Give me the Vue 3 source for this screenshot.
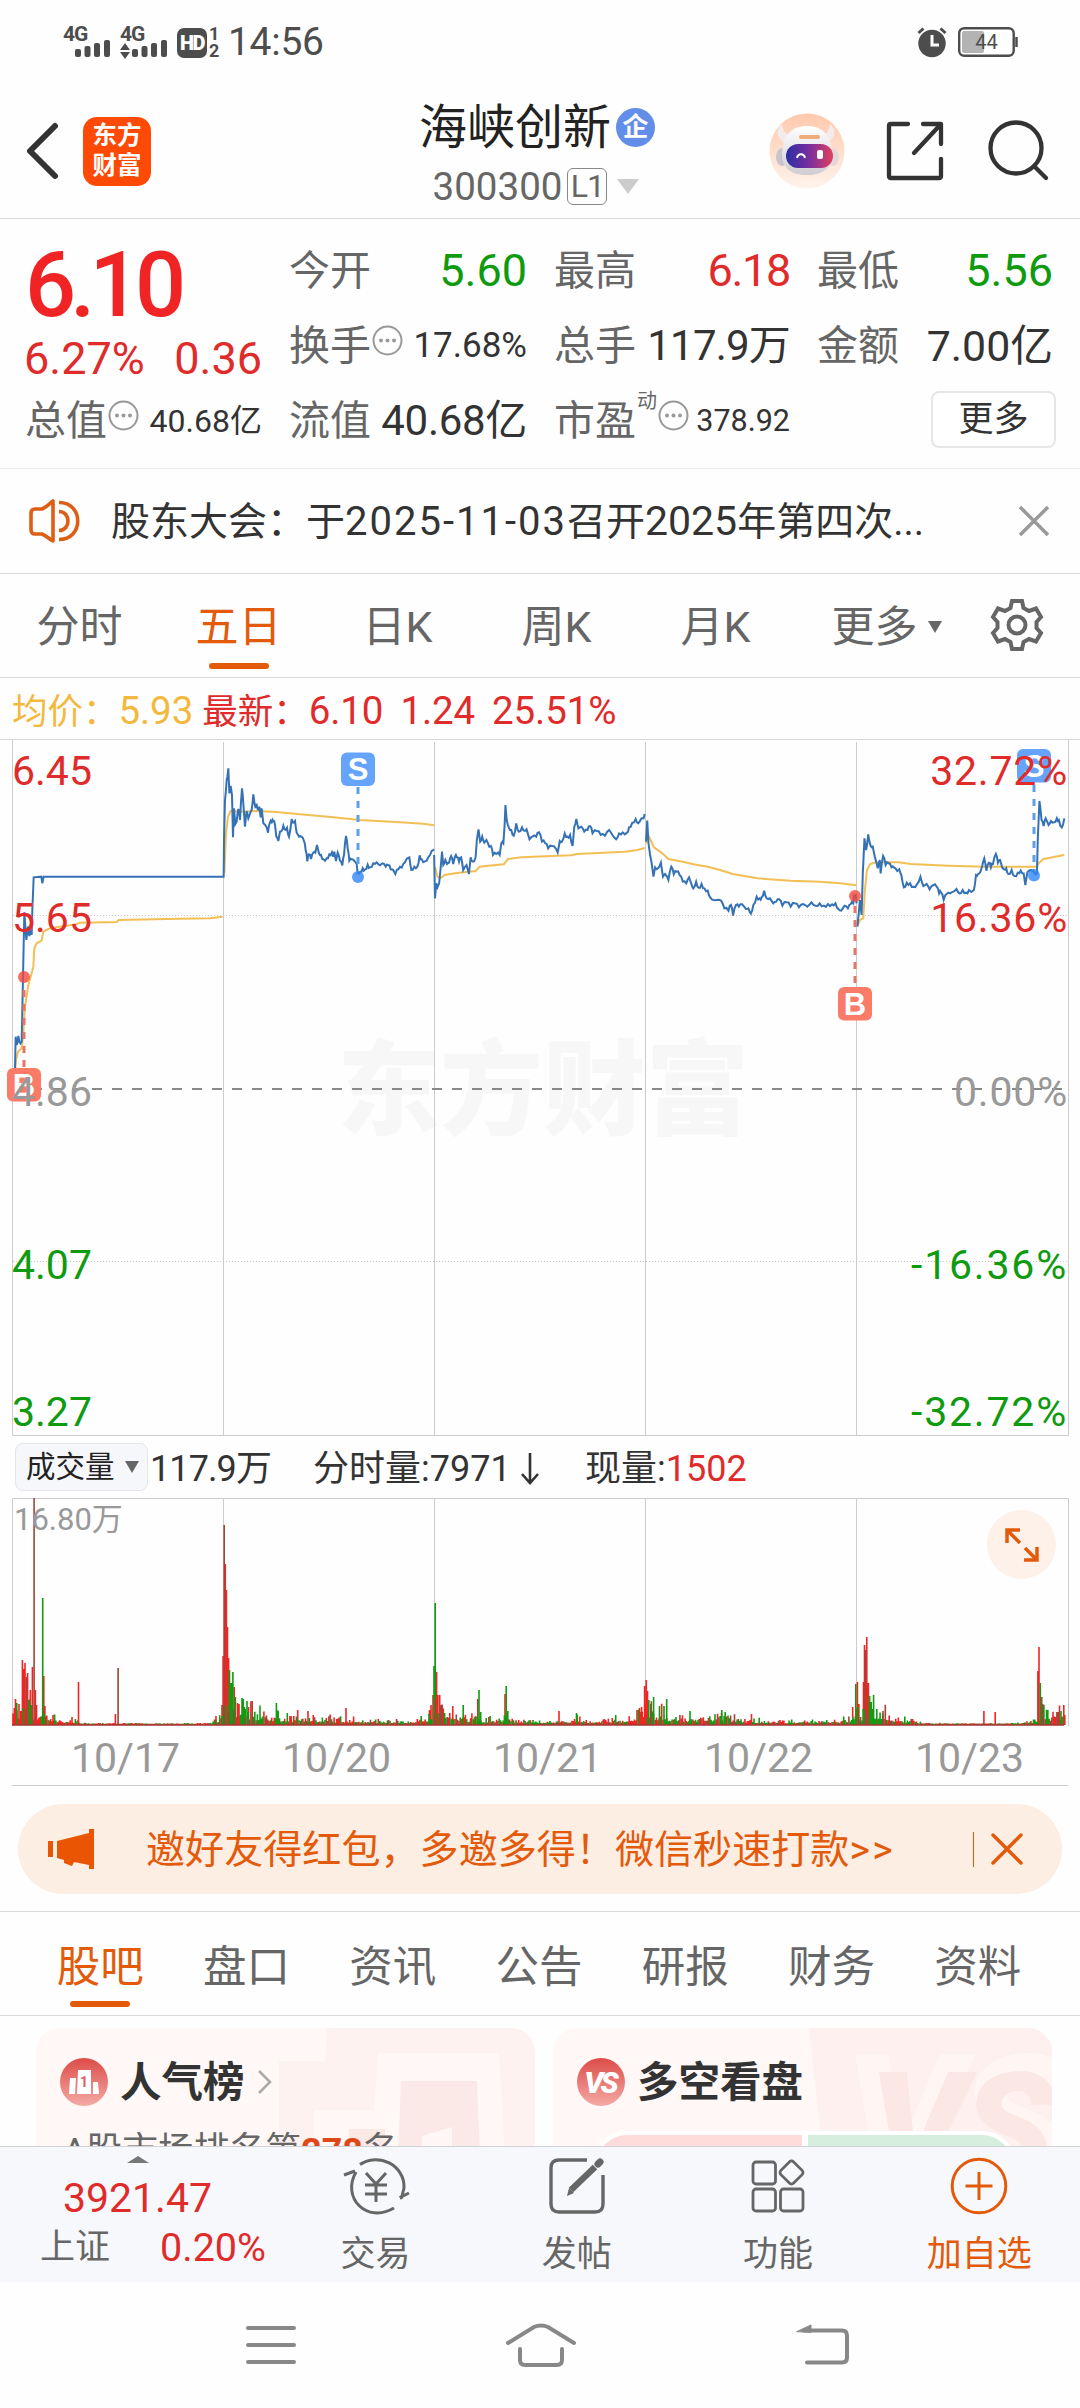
<template>
  <div class="phone">
    <!-- 状态栏 -->
    <div class="status-bar">
      <div class="status-left">
        <svg width="152" height="36" viewBox="0 0 152 36" fill="#4d4d4d">
          <text x="0" y="17" class="net">4G</text>
          <rect x="12" y="25" width="6" height="8" rx="2" />
          <rect x="21.500" y="22" width="6" height="11" rx="2" />
          <rect x="31" y="19" width="6" height="14" rx="2" />
          <rect x="41" y="16" width="6" height="17" rx="2" />
          <text x="57" y="17" class="net">4G</text>
          <path d="M57 26l5-7 5 7zM57 28h10l-5 7z" />
          <rect x="69" y="25" width="6" height="8" rx="2" />
          <rect x="78.500" y="22" width="6" height="11" rx="2" />
          <rect x="88" y="19" width="6" height="14" rx="2" />
          <rect x="98" y="16" width="6" height="17" rx="2" />
          <rect x="114" y="4" width="30" height="30" rx="7" />
          <text x="117" y="26" class="hd">HD</text>
        </svg>
        <div class="sim"><span>1</span><span>2</span></div>
        <span class="clock">14:56</span>
      </div>
      <div class="status-right">
        <svg width="30" height="30" viewBox="0 0 30 30">
          <circle cx="15" cy="16.500" r="13.700" fill="#4d4d4d" />
          <path d="M1.500 6l5-4.500M28.500 6l-5-4.500" stroke="#4d4d4d" stroke-width="3" />
          <path d="M15 8v10h7" fill="none" stroke="#fff" stroke-width="3" />
        </svg>
        <svg width="60" height="30" viewBox="0 0 60 30">
          <rect x="1.200" y="1.200" width="54.500" height="27.600" rx="5" fill="#fff" stroke="#4d4d4d" stroke-width="2.400" />
          <rect x="4" y="4" width="22" height="22" rx="2" fill="#b3b3b3" />
          <path d="M58.500 10v10" stroke="#4d4d4d" stroke-width="2.500" />
          <text x="28.500" y="22" class="battery">44</text>
        </svg>
      </div>
    </div>

    <!-- 标题栏 -->
    <div class="header">
      <div class="header-left">
        <svg width="34" height="58" viewBox="0 0 34 58">
          <path d="M30 4L5 29l25 25" fill="none" stroke="#333" stroke-width="6" stroke-linecap="round" stroke-linejoin="round" />
        </svg>
        <div class="logo"><span>东方</span><span>财富</span></div>
      </div>
      <div class="header-title">
        <div class="name">海峡创新<span class="badge">企</span></div>
        <div class="code">300300<span class="level">L1</span><i class="caret"></i></div>
      </div>
      <div class="header-right">
        <svg width="76" height="76" viewBox="0 0 76 76">
          <defs>
            <linearGradient id="halo" x1="0" y1="0" x2="0" y2="1">
              <stop offset="0" stop-color="#ffc9ac" /><stop offset="1" stop-color="#fff3ec" />
            </linearGradient>
            <linearGradient id="visor" x1="0" y1="0" x2="1" y2="0">
              <stop offset="0" stop-color="#2b2fa3" /><stop offset=".5" stop-color="#7a2f9f" /><stop offset="1" stop-color="#e2405c" />
            </linearGradient>
            <linearGradient id="shell" x1="0" y1="0" x2="0" y2="1">
              <stop offset="0" stop-color="#fff" /><stop offset="1" stop-color="#cfccd2" />
            </linearGradient>
          </defs>
          <circle cx="38" cy="38" r="37.500" fill="url(#halo)" />
          <path d="M13 11c-6 5-7 13 3 19l7-7c-6-1-9-5-10-12zM61 11c6 5 7 13-3 19l-6-7c6-1 8-5 9-12z" fill="#f3ebea" />
          <ellipse cx="13" cy="44" rx="6" ry="9" fill="#c9c3cb" />
          <ellipse cx="64" cy="44" rx="6" ry="9" fill="#e2d8dc" />
          <path d="M13 42c0-19 9-29 25-29s25 10 25 29c0 13-9 20-25 20s-25-7-25-20z" fill="url(#shell)" />
          <rect x="30" y="22" width="21" height="4" rx="2" fill="#efac78" />
          <rect x="17" y="31" width="47" height="24" rx="12" fill="url(#visor)" />
          <path d="M28 45c1-5 7-5 8 0" fill="none" stroke="#fff" stroke-width="2" />
          <rect x="48" y="37" width="6" height="9" rx="2" fill="#fff" />
        </svg>
        <svg width="60" height="60" viewBox="0 0 60 60" fill="none" stroke="#333" stroke-width="4.300" stroke-linecap="round" stroke-linejoin="round">
          <path d="M22 3H5q-2 0-2 2v50q0 2 2 2h48q2 0 2-2V38M37 3h18v20M55 3L28 32" />
        </svg>
        <svg width="62" height="62" viewBox="0 0 62 62" fill="none" stroke="#333" stroke-width="4.300" stroke-linecap="round">
          <circle cx="29" cy="28" r="25.500" />
          <path d="M47 46l12 12" />
        </svg>
      </div>
    </div>

    <!-- 行情 -->
    <div class="quote">
      <div class="price-box">
        <div class="price">6.10</div>
        <div class="change"><span>6.27%</span><span>0.36</span></div>
      </div>
      <div v-for="item in stats" :key="item.label" class="stat">
        <span class="label">{{ item.label }}</span>
        <sup v-if="item.sup">{{ item.sup }}</sup>
        <svg v-if="item.tip" class="tip" width="31" height="31" viewBox="0 0 31 31">
          <circle cx="15.500" cy="15.500" r="14" fill="none" stroke="#999" stroke-width="2" />
          <circle cx="9" cy="15.500" r="2" fill="#999" />
          <circle cx="15.500" cy="15.500" r="2" fill="#999" />
          <circle cx="22" cy="15.500" r="2" fill="#999" />
        </svg>
        <span class="value" :class="[item.color, item.size]">{{ item.value }}</span>
      </div>
      <div class="more-cell"><button class="more-btn">更多</button></div>
    </div>

    <!-- 公告 -->
    <div class="notice">
      <svg width="52" height="44" viewBox="0 0 52 44" fill="none" stroke="#dc5f14" stroke-width="3.600">
        <path d="M24 2v40C20 40 18 37 13 35H6q-4 0-4-4V14q0-4 4-4h7c5-2 7-5 11-8z" stroke-linejoin="round" />
        <path d="M30 3.500c25 0 25 37 0 37M30 12.500c12 0 12 19 0 19" />
      </svg>
      <div class="notice-text">股东大会：于<span class="date">2025-11-03</span>召开<span class="num">2025</span>年第四次...</div>
      <svg width="30" height="30" viewBox="0 0 30 30"><path d="M1 1l28 28M29 1L1 29" stroke="#999" stroke-width="3.500" /></svg>
    </div>

    <!-- 周期 -->
    <div class="period">
      <div v-for="p in periods" :key="p" class="period-item" :class="{ active: p === '五日' }">
        {{ p }}<i v-if="p === '更多'" class="caret small"></i>
      </div>
      <div class="gear">
        <svg width="54" height="54" viewBox="0 0 54 54" fill="none" stroke="#666" stroke-width="4">
          <path d="M22 3h10l1.500 7 5.500 3 7-2.500 5 8.500-4.500 5v6l4.500 5-5 8.500-7-2.500-5.500 3L32 51H22l-1.500-7-5.500-3-7 2.500L3 35l4.500-5v-6L3 19l5-8.500 7 2.500 5.500-3z" />
          <circle cx="27" cy="27" r="8.500" />
        </svg>
      </div>
    </div>

    <div class="info-line">
      <span class="avg">均价：<b>5.93</b></span>
      <span class="last">最新：<b>6.10</b><b>1.24</b><b>25.51%</b></span>
    </div>

    <!-- 五日走势 -->
    <svg class="chart" width="1080" height="696" viewBox="0 0 1080 696">
      <text x="337" y="387" class="watermark">东方财富</text>
      <path d="M12.500 0V695.500H1068.500V0" class="grid" />
      <path v-for="x in gridX" :key="x" :d="`M${x} 2V695`" class="grid" />
      <path d="M13 175.500H1068M13 521.500H1068" class="dotted" />
      <path d="M12 349H1066" class="zero" />
      <g transform="scale(.33333)">
        <polyline v-for="(l, i) in avgLeft" :key="i" :points="l" class="line-avg" />
        <polyline v-for="(l, i) in priceLeft" :key="i" :points="jag(l)" class="line-price" />
      </g>
      <g transform="translate(430 0) scale(.41457 .33333)">
        <polyline v-for="(l, i) in avgRight" :key="i" :points="l" class="line-avg" />
        <polyline v-for="(l, i) in priceRight" :key="i" :points="jag(l)" class="line-price" />
      </g>
      <g v-for="(m, i) in marks" :key="i" :class="m.type === 'S' ? 'sell' : 'buy'">
        <path :d="`M${m.x} ${m.from}V${m.to}`" class="mark-line" />
        <circle :cx="m.x" :cy="m.dot" r="6" />
        <rect :x="m.x - 17" :y="m.y" width="34" height="33.500" rx="6" />
        <text :x="m.x" :y="m.y + 27.500" class="mark-text">{{ m.type }}</text>
      </g>
      <g v-for="a in axis" :key="a.y" :class="a.color" class="axis">
        <text x="12" :y="a.y">{{ a.price }}</text>
        <text x="1068" :y="a.y" class="pct" :class="{ minus: a.pct[0] === '-' }">{{ a.pct }}</text>
      </g>
    </svg>

    <!-- 成交量 -->
    <div class="vol-head">
      <div class="vol-select">成交量<i class="caret small"></i></div>
      <span class="vol-total">117.9万</span>
      <span class="vol-min">分时量:7971<svg width="20" height="32" viewBox="0 0 20 32"><path d="M10 0v29M2 21l8 9 8-9" fill="none" stroke="#333" stroke-width="2.600" /></svg></span>
      <span class="vol-now">现量:<b>1502</b></span>
    </div>
    <div class="vol-box">
      <svg width="1080" height="230" viewBox="0 0 1080 230">
        <path d="M12.500 228V.5H1068.500V228" class="grid" />
        <path v-for="x in gridX" :key="x" :d="`M${x} 0V226`" class="grid" />
        <path :d="volRed" stroke="#ef2525" stroke-width="1.600" />
        <path :d="volGreen" stroke="#129a12" stroke-width="1.600" />
        <path :d="volMix" stroke="#a04438" stroke-width="1.600" />
        <path d="M12 227H1064" stroke="#a8332f" stroke-width="1.600" />
        <text x="14" y="32" class="vol-max">16.80万</text>
      </svg>
      <div class="expand">
        <svg width="36" height="36" viewBox="0 0 36 36" fill="none" stroke="#e35a0b" stroke-width="3.500">
          <path d="M16 3H3v13M3 3l13 13M33 20v13H20M33 33L21 21" />
        </svg>
      </div>
    </div>
    <div class="dates"><span v-for="d in dates" :key="d">{{ d }}</span></div>

    <!-- 活动条 -->
    <div class="promo">
      <svg width="46" height="40" viewBox="0 0 46 40" fill="#ea5504">
        <path d="M0 12h5v16H0zM9 12L41 4V0h5v40h-5v-4l-15-3-2 4-8-3v-3l-7-2z" />
      </svg>
      <span class="promo-text">邀好友得红包，多邀多得！微信秒速打款<b>&gt;&gt;</b></span>
      <i class="promo-line"></i>
      <svg width="34" height="34" viewBox="0 0 34 34"><path d="M3 3l28 28M31 3L3 31" stroke="#e35a0b" stroke-width="3.500" stroke-linecap="round" /></svg>
    </div>

    <div class="tabs">
      <div v-for="t in tabs" :key="t" class="tab" :class="{ active: t === '股吧' }">{{ t }}</div>
    </div>

    <!-- 卡片 -->
    <div class="cards">
      <div class="card">
        <svg class="card-bg" width="256" height="130" viewBox="0 0 256 130">
          <path d="M0 33h46L48 0h208v130H0z" fill="#fdf2f0" />
          <path d="M35 130V82h60L99 25h121l6 105z" fill="#fff8f6" />
          <path d="M119 130l3-77h76l3 77z" fill="#fae9e6" />
          <path d="M70 101h36v29H70z" fill="#fbe9e6" />
          <path d="M143 108l30-9v31h-30z" fill="#fff7f5" />
        </svg>
        <div class="card-title">
          <svg width="48" height="48" viewBox="0 0 48 48">
            <defs>
              <linearGradient id="red" x1="0" y1="0" x2="0" y2="1">
                <stop offset="0" stop-color="#dc4c48" /><stop offset="1" stop-color="#f5a9a5" />
              </linearGradient>
            </defs>
            <circle cx="24" cy="24" r="24" fill="url(#red)" />
            <path d="M10 20h6l-1 16H9zM18 12h13v24H17zM33 24h5l1 12h-6z" fill="#fff" />
            <text x="24" y="29" text-anchor="middle" class="rank-one">1</text>
          </svg>
          <span>人气榜</span>
          <svg width="16" height="26" viewBox="0 0 16 26"><path d="M2 2l11 11L2 24" fill="none" stroke="#aaa" stroke-width="2.500" /></svg>
        </div>
        <div class="rank">A股市场排名第<b>278</b>名</div>
      </div>
      <div class="card">
        <svg class="card-bg" width="243" height="160" viewBox="0 0 243 160">
          <path d="M0 0h243v160H18z" fill="#fdf0ee" />
          <text x="34" y="158" class="vs-shadow">VS</text>
          <text x="60" y="152" class="vs-big">VS</text>
        </svg>
        <div class="card-title">
          <svg width="48" height="48" viewBox="0 0 48 48">
            <circle cx="24" cy="24" r="24" fill="url(#red)" />
            <text x="23" y="35" text-anchor="middle" class="vs">VS</text>
          </svg>
          <span>多空看盘</span>
        </div>
        <div class="vote"><i class="up"></i><i class="down"></i></div>
      </div>
    </div>

    <!-- 底部栏 -->
    <div class="bottom">
      <div class="index">
        <i class="index-arrow"></i>
        <div class="index-value">3921.47</div>
        <div class="index-row"><span>上证</span><b>0.20%</b></div>
      </div>
      <div class="action">
        <svg width="66" height="58" viewBox="0 0 66 58" fill="none" stroke="#666" stroke-width="3">
          <path d="M17 7.500C35-5 62 8 61 31l-2 8M59 42l-1-2 8-4M13 15C-2 41 24 67 51 51M1 18l11-4" />
          <path d="M23 16l10 11 10-11M33 27v18M22 28h22M22 37h22" />
        </svg>
        <span>交易</span>
      </div>
      <div class="action">
        <svg width="56" height="58" viewBox="0 0 56 58" fill="none" stroke="#666" stroke-width="3.400">
          <path d="M38 3H10q-8 0-8 8v36q0 8 8 8h36q8 0 8-8V18" />
          <path d="M22 33L46 10" stroke-width="6.500" />
          <path d="M49 7l2-2" stroke-width="7" stroke-linecap="round" />
          <path d="M18 39l2-8 5 5z" fill="#666" stroke="none" />
        </svg>
        <span>发帖</span>
      </div>
      <div class="action">
        <svg width="54" height="58" viewBox="0 0 54 58" fill="none" stroke="#666" stroke-width="2.800">
          <rect x="2" y="5" width="22.500" height="22" rx="3" />
          <rect x="2" y="32" width="22.500" height="22" rx="3" />
          <rect x="29.500" y="32" width="22.500" height="22" rx="3" />
          <rect x="31.500" y="6.500" width="18" height="18" rx="3" transform="rotate(45 40.500 15.500)" />
        </svg>
        <span>功能</span>
      </div>
      <div class="action add">
        <svg width="58" height="58" viewBox="0 0 58 58" fill="none" stroke="#e35a0b" stroke-width="3">
          <circle cx="29" cy="29" r="26.800" />
          <path d="M29 15v28M15.500 29h27" />
        </svg>
        <span>加自选</span>
      </div>
    </div>

    <!-- 系统导航 -->
    <div class="sys-nav">
      <svg width="52" height="44" viewBox="0 0 52 44" fill="none" stroke="#888" stroke-width="4" stroke-linecap="round"><path d="M3 5h46M3 22h46M3 39h46" /></svg>
      <svg class="home" width="74" height="46" viewBox="0 0 74 46" fill="none" stroke="#888" stroke-width="4" stroke-linecap="round"><path d="M4 21L30 5q7-3 14 0l26 16M16 27v11q0 5 5 5h32q5 0 5-5V27" /></svg>
      <svg width="54" height="46" viewBox="0 0 54 46" fill="none" stroke="#888" stroke-width="4" stroke-linecap="round"><path d="M8 8.500h38q5 0 5 5v22q0 5-5 5H11" /><path d="M1 9.500L15 3v7z" fill="#888" stroke-width="1" /></svg>
    </div>
  </div>
</template>

<script setup>
const stats = [
  { label: '今开', value: '5.60', color: 'green' },
  { label: '最高', value: '6.18', color: 'red', size: 'narrow' },
  { label: '最低', value: '5.56', color: 'green' },
  { label: '换手', value: '17.68%', tip: true, size: 'mid' },
  { label: '总手', value: '117.9万', size: 'tight' },
  { label: '金额', value: '7.00亿', size: 'wide' },
  { label: '总值', value: '40.68亿', tip: true, size: 'small' },
  { label: '流值', value: '40.68亿', size: 'large' },
  { label: '市盈', sup: '动', value: '378.92', tip: true, size: 'mini' }
]

const periods = ['分时', '五日', '日K', '周K', '月K', '更多']
const tabs = ['股吧', '盘口', '资讯', '公告', '研报', '财务', '资料']
const dates = ['10/17', '10/20', '10/21', '10/22', '10/23']
const gridX = [223.5, 434.5, 645.5, 856.5]

const axis = [
  { price: '6.45', pct: '32.72%', y: 45, color: 'red' },
  { price: '5.65', pct: '16.36%', y: 192, color: 'red' },
  { price: '4.86', pct: '0.00%', y: 366, color: 'gray' },
  { price: '4.07', pct: '-16.36%', y: 539, color: 'green' },
  { price: '3.27', pct: '-32.72%', y: 686, color: 'green' }
]

const marks = [
  { type: 'S', x: 358, y: 12.5, from: 47, to: 132, dot: 137 },
  { type: 'S', x: 1034, y: 9, from: 45, to: 130, dot: 135.5 },
  { type: 'B', x: 24, y: 328, from: 250, to: 327, dot: 237 },
  { type: 'B', x: 855, y: 247, from: 166, to: 246, dot: 156 }
]

const priceLeft = [
  '37,1065 45,985 47,890 50,915 55,888 58,905 65,905 69,712 73,517 79,600 84,560 88,588 93,560 95,585 97,510 101,412 124,410 127,430 131,410 671,410 672,300 675,180 680,120 685,85 688,160 692,138 696,165 699,292 702,205 706,252 710,245 715,207 720,240 726,145 731,205 735,260 740,213 745,235 752,215 755,210 760,163 766,200 770,195 773,208 778,200 782,232 785,205 790,250 800,262 804,278 809,250 815,247 820,243 825,255 829,290 835,303 840,275 845,272 850,257 857,270 861,263 867,290 875,237 881,248 885,243 890,278 897,290 904,290 912,303 917,330 922,364 927,343 933,357 940,338 946,338 951,315 957,340 963,345 970,358 980,355 988,343 996,337 1000,350 1003,335 1008,363 1013,338 1020,362 1027,376 1032,345 1038,288 1043,325 1048,362 1055,358 1065,365 1070,372 1073,400 1082,395 1088,385 1095,388 1103,374 1110,382 1120,370 1130,367 1140,376 1148,370 1157,380 1165,376 1172,388 1186,402 1195,388 1205,383 1215,367 1222,355 1228,352 1234,390 1243,380 1252,380 1259,346 1265,358 1275,364 1285,352 1295,333 1302,328'
]
const avgLeft = [
  '45,1000 48,960 54,935 65,925 70,880 75,800 85,735 95,700 100,680 103,625 110,610 125,602 130,575 150,565 200,557 230,553 238,548 350,546 356,540 500,537 630,535 668,530',
  '673,400 678,280 684,230 692,213 730,215 770,213 830,216 900,223 1000,232 1080,240 1200,247 1270,251 1302,256'
]
const priceRight = [
  '10,345 12,475 15,430 18,442 22,430 26,380 29,335 32,375 37,360 41,372 46,368 51,348 56,372 60,350 65,352 70,365 75,352 80,390 88,375 94,402 98,352 103,365 110,352 113,300 117,268 121,305 126,290 131,308 136,300 143,320 147,318 152,345 160,342 168,345 172,310 177,310 180,255 182,195 185,240 190,262 196,270 202,287 208,250 214,275 222,262 228,272 233,268 240,298 247,290 256,290 263,277 270,305 278,310 285,325 295,318 303,325 308,337 313,303 318,305 325,280 331,290 338,285 344,318 348,260 353,237 358,265 365,260 372,275 380,270 386,258 392,280 402,273 412,285 422,287 432,270 440,285 449,298 456,280 465,277 475,278 480,262 488,248 496,237 502,250 510,235 515,235 518,222',
  '521,305 524,242 527,310 531,345 535,372 539,410 543,382 550,385 557,368 562,410 567,402 575,420 582,380 588,403 595,395 602,405 610,425 618,430 625,412 630,430 635,445 642,425 648,443 655,432 662,445 670,452 676,472 684,480 692,480 702,482 710,505 720,512 726,495 731,527 738,495 745,500 752,492 762,507 768,505 774,521 780,495 788,470 795,475 800,472 806,452 812,475 820,475 828,490 835,485 842,478 850,497 860,487 870,500 880,490 890,502 900,492 910,500 920,487 930,497 940,490 950,497 960,492 970,493 978,490 985,507 992,512 1000,497 1008,505 1015,492 1021,490 1023,466 1027,465 1029,490',
  '1031,560 1037,480 1041,525 1044,400 1048,295 1052,330 1057,283 1063,318 1068,320 1073,350 1080,385 1085,360 1087,400 1093,348 1099,375 1106,370 1113,382 1120,383 1127,393 1132,388 1137,405 1143,442 1150,428 1158,430 1166,440 1175,432 1183,410 1190,438 1198,432 1205,448 1215,435 1222,440 1228,460 1233,458 1239,480 1246,462 1255,460 1263,455 1270,447 1277,460 1285,450 1293,458 1300,450 1312,450 1317,405 1322,402 1328,395 1332,378 1337,355 1342,392 1348,368 1353,382 1358,372 1365,342 1370,368 1375,360 1380,382 1385,388 1390,385 1395,402 1403,390 1410,408 1418,398 1425,392 1432,400 1436,435 1441,397 1450,390 1460,403 1464,400 1466,300 1470,183 1475,240 1480,258 1485,235 1492,255 1498,243 1505,247 1512,235 1517,240 1524,262 1530,235'
]
const avgRight = [
  '12,380 18,410 25,415 35,405 60,400 110,393 120,380 140,377 178,373 188,357 220,352 340,346 355,342 470,335 500,330 518,324',
  '521,310 526,285 532,300 540,322 555,335 565,345 575,357 610,365 635,373 670,380 700,390 730,402 790,415 870,422 940,425 990,430 1028,436',
  '1032,555 1037,540 1045,535 1049,450 1054,390 1062,372 1075,367 1130,367 1160,372 1250,377 1340,380 1464,380 1468,370 1480,357 1530,345'
]

// 在两点之间补一个小波动
const jag = (line) => {
  const pts = line.split(' ').map(p => p.split(',').map(Number))
  const out = [pts[0]]
  for (let i = 1; i < pts.length; i++) {
    const [ax, ay] = pts[i - 1]
    const [bx, by] = pts[i]
    if (bx - ax > 4 && bx - ax < 16) {
      out.push([(ax + bx) / 2, (ay + by) / 2 + Math.sin(i * 12.9) * 6])
    }
    out.push([bx, by])
  }
  return out.map(p => p.join(',')).join(' ')
}

// 成交量尖峰：x、高度、颜色
const spikes = [
  [15.5, 26, 'r'], [16.8, 22, 'g'], [19, 21, 'r'], [22.4, 65, 'r'], [23.8, 56, 'r'], [25, 62, 'r'], [26.2, 48, 'm'], [27.6, 52, 'r'], [28.8, 25, 'g'], [30.3, 35, 'r'], [31.3, 20, 'g'], [32.4, 58, 'r'], [34.1, 227, 'm'], [35.4, 35, 'r'], [36.5, 20, 'r'],
  [42.7, 127, 'g'], [43.8, 49, 'r'], [44.9, 19, 'r'], [53, 10, 'r'], [72, 8, 'r'], [78.5, 43, 'r'], [115.4, 11, 'r'], [118.1, 57, 'm'],
  [216, 9, 'r'], [222, 20, 'r'], [223.1, 69, 'r'], [224.2, 200, 'm'], [225.3, 161, 'r'], [226.4, 135, 'r'], [227.5, 98, 'r'], [228.6, 67, 'r'], [229.5, 55, 'g'], [230.6, 42, 'g'], [231.8, 42, 'g'], [232.9, 53, 'g'], [234.2, 38, 'r'], [235.4, 28, 'g'], [237.5, 22, 'r'], [239, 21, 'r'], [242, 27, 'g'], [243.3, 26, 'g'], [245.2, 16, 'g'], [248.5, 18, 'r'], [252.2, 24, 'm'], [260, 16, 'g'], [276.4, 22, 'g'], [308, 14, 'r'], [346, 17, 'r'],
  [429.5, 15, 'r'], [431, 20, 'r'], [433, 30, 'r'], [434, 59, 'g'], [435.2, 122, 'g'], [436.6, 53, 'r'], [437.8, 30, 'r'], [439.7, 30, 'r'], [442, 20, 'r'], [452.8, 19, 'r'], [463.2, 20, 'g'], [477.8, 26, 'r'], [479, 35, 'g'], [480.7, 13, 'g'], [505, 31, 'r'], [506.2, 39, 'g'], [507.8, 14, 'g'],
  [559, 14, 'r'], [576.5, 12, 'g'], [615.7, 10, 'g'], [637, 15, 'r'], [639.5, 17, 'r'], [641.6, 18, 'r'], [644.6, 39, 'r'], [646.3, 45, 'r'], [647.5, 34, 'r'], [648.8, 25, 'g'], [650.8, 21, 'g'], [653.6, 28, 'g'], [659.5, 19, 'g'], [664, 19, 'g'], [666.7, 26, 'g'], [690, 14, 'g'], [721.8, 15, 'g'], [725.2, 13, 'g'], [751.5, 11, 'r'],
  [852.7, 18, 'r'], [855.8, 41, 'g'], [857.4, 43, 'r'], [858.9, 21, 'r'], [863.5, 43, 'r'], [864.5, 80, 'r'], [865.5, 75, 'm'], [866.8, 88, 'r'], [868.4, 42, 'r'], [869.6, 29, 'g'], [871.2, 23, 'g'], [872.6, 16, 'g'], [876.8, 16, 'g'], [883, 14, 'm'], [983.9, 14, 'r'], [995.2, 13, 'r'],
  [1037.9, 54, 'r'], [1039, 78, 'r'], [1040.3, 42, 'g'], [1041.7, 28, 'm'], [1043, 19, 'g'], [1061, 14, 'g'], [1063.8, 20, 'r'], [1064.8, 10, 'r']
]

// 尖峰周围的底量：中心、幅度、左右衰减
const swells = [
  [14, 14, 3, 4], [28, 24, 8, 7], [44, 10, 2, 10], [225, 30, 3, 14], [240, 12, 6, 34], [300, 4, 30, 60], [436, 22, 6, 8], [450, 9, 8, 26],
  [506, 8, 4, 6], [576, 6, 4, 5], [646, 20, 12, 6], [660, 10, 8, 25], [724, 8, 16, 14], [857, 12, 8, 5], [868, 30, 3, 9], [885, 8, 8, 14], [1042, 20, 1, 7], [1060, 10, 9, 6]
]

let seed = 7
const rand = () => {
  seed = (seed * 16807) % 2147483647
  return seed / 2147483647
}

const paths = { r: '', g: '', m: '' }
const bar = (x, h, c) => {
  paths[c] += `M${x.toFixed(1)} 227V${(227 - h).toFixed(1)}`
}
for (let x = 13; x < 1064; x += 1.3) {
  const quiet = x > 80 && x < 212
  let level = quiet || (x > 915 && x < 1025) ? 0.8 : 3
  for (const [c, amp, l, r] of swells) {
    level += quiet ? 0 : amp * Math.exp(-Math.abs(x - c) / (x < c ? l : r))
  }
  const warm = x < 80 || (x > 630 && x < 646) || (x > 418 && x < 433)
  const c = rand() * (warm ? 0.55 : 1)
  bar(x, 1 + level * (0.25 + rand() * rand() * 1.4), c < 0.45 ? 'r' : c < 0.85 ? 'g' : 'm')
}
spikes.forEach(s => bar(...s))

const volRed = paths.r
const volGreen = paths.g
const volMix = paths.m
</script>

<style>
body {
  margin: 0;
  background: #fff;
}
</style>

<style scoped>
.phone {
  width: 1080px;
  height: 2408px;
  overflow: hidden;
  background: #fefefe;
  color: #333;
  font-family: Roboto, "Noto Sans CJK SC", sans-serif;
}

.phone svg {
  display: block;
  flex: none;
  overflow: visible;
}

i {
  font-style: normal;
}

b {
  font-weight: normal;
}

.red { color: #e02b2b; fill: #e02b2b; }
.green { color: #0f9a0f; fill: #0f9a0f; }
.gray { color: #999; fill: #999; }

/* 状态栏 */
.status-bar {
  height: 84px;
  display: flex;
  justify-content: space-between;
  box-sizing: border-box;
  padding: 0 62px 0 63px;
  align-items: center;
}

.status-left, .status-right {
  display: flex;
  align-items: center;
}

.status-right {
  gap: 11px;
}

.net {
  font-size: 21px;
  font-weight: bold;
  letter-spacing: -1px;
}

.hd {
  font-size: 20px;
  font-weight: 900;
  fill: #fff;
  letter-spacing: -1.5px;
}

.battery {
  font-size: 20px;
  text-anchor: middle;
  fill: #4d4d4d;
}

.sim {
  display: flex;
  flex-direction: column;
  width: 14px;
  margin-left: -6px;
  font-size: 18px;
  line-height: 17px;
  font-weight: bold;
  color: #4d4d4d;
}

.clock {
  margin-left: 5px;
  font-size: 39px;
  line-height: 40px;
  letter-spacing: -0.3px;
  color: #4d4d4d;
}

/* 标题栏 */
.header {
  height: 134px;
  border-bottom: 1px solid #d9d9d9;
  display: flex;
}

.header-left, .header-right {
  flex: 1;
  display: flex;
  align-items: center;
}

.header-left {
  padding-left: 25px;
  gap: 24px;
}

.header-right {
  justify-content: flex-end;
  gap: 41px;
  padding-right: 31px;
}

.logo {
  width: 68px;
  height: 69px;
  border-radius: 14px;
  background: #ff4a05;
  color: #fff;
  display: flex;
  flex-direction: column;
  align-items: center;
  justify-content: center;
  font-size: 24.500px;
  line-height: 30px;
  font-weight: bold;
}

.header-title {
  padding-top: 14px;
  display: flex;
  flex-direction: column;
  align-items: center;
}

.name {
  display: flex;
  align-items: center;
  height: 60px;
  line-height: 60px;
  font-size: 48px;
  color: #222;
}

.badge {
  width: 39px;
  height: 39px;
  line-height: 38px;
  border-radius: 50%;
  background: #628ee9;
  color: #fff;
  font-size: 26px;
  font-weight: bold;
  text-align: center;
  margin: 0 0 2px 5px;
}

.code {
  display: flex;
  align-items: center;
  height: 57px;
  margin-right: 2px;
  font-size: 38.500px;
  color: #666;
}

.level {
  box-sizing: border-box;
  width: 40px;
  height: 37px;
  line-height: 34px;
  border: 1px solid #888;
  border-radius: 6px;
  margin-left: 5px;
  font-size: 32px;
  letter-spacing: -1px;
  text-align: center;
}

.caret {
  border: 11px solid transparent;
  border-top: 15px solid #ccc;
  border-bottom: 0;
  margin-left: 10px;
}

.caret.small {
  border-width: 12px 7.500px 0;
  border-top-color: #666;
}

/* 行情 */
.quote {
  height: 236px;
  box-sizing: content-box;
  padding: 13px 27px 0 25px;
  border-bottom: 1px solid #ececec;
  display: grid;
  grid-template-columns: 237px 238px 236px 236px;
  grid-template-rows: 75px 75px 75px;
  column-gap: 27px;
}

.price-box {
  grid-row: 1 / 3;
}

.price {
  height: 103px;
  line-height: 107px;
  font-size: 90px;
  font-weight: 500;
  letter-spacing: -5.800px;
  color: #f02424;
}

.change {
  display: flex;
  justify-content: space-between;
  margin-left: -1px;
  line-height: 48px;
  font-size: 45px;
  color: #e02b2b;
}

.stat {
  display: flex;
  align-items: center;
  white-space: nowrap;
}

.label {
  font-size: 41px;
  line-height: 48px;
  padding-top: 3px;
  color: #666;
}

.stat sup {
  font-size: 20px;
  line-height: 20px;
  color: #666;
  align-self: flex-start;
  margin: 9px 0 0 1px;
}

.tip {
  margin: 0 0 8px 1px;
}

.value {
  margin-left: auto;
  padding-top: 3px;
  font-size: 45px;
  line-height: 48px;
}

.value.narrow { letter-spacing: -1.3px; }
.value.mid { font-size: 35px; }
.value.small { font-size: 32px; }
.value.mini { font-size: 30.500px; }
.value.large { font-size: 42px; letter-spacing: -0.3px; padding-top: 2px; }
.value.wide { font-size: 42.800px; padding-top: 2px; }
.value.tight { font-size: 42px; letter-spacing: -0.8px; padding-top: 2px; }

.more-cell {
  display: flex;
  align-items: center;
  justify-content: flex-end;
  margin-right: -3px;
}

.more-btn {
  width: 125px;
  height: 57px;
  padding: 0;
  border: 2px solid #e6e6e6;
  border-radius: 8px;
  background: #fff;
  font: 35px Roboto, "Noto Sans CJK SC", sans-serif;
  line-height: 50px;
  color: #333;
}

/* 公告 */
.notice {
  height: 104px;
  border-bottom: 1px solid #d9d9d9;
  display: flex;
  align-items: center;
  padding: 0 31px 0 29px;
}

.notice-text {
  flex: 1;
  margin-left: 30px;
  font-size: 39px;
  line-height: 60px;
  white-space: nowrap;
}

.date {
  font-size: 40px;
  letter-spacing: 2px;
}

.num {
  font-size: 41px;
}

/* 周期 */
.period {
  height: 103px;
  border-bottom: 1px solid #d9d9d9;
  display: flex;
}

.period-item {
  position: relative;
  width: 159px;
  display: flex;
  align-items: center;
  justify-content: center;
  font-size: 43px;
  line-height: 108px;
  padding-top: 3px;
  box-sizing: border-box;
  height: 103px;
  color: #666;
}

.period-item:nth-child(6) {
  width: 175px;
  margin-left: 4px;
}

.period-item.active {
  color: #e35a0b;
}

.active::after {
  content: "";
  position: absolute;
  left: 50%;
  bottom: 8px;
  width: 60px;
  height: 6px;
  margin-left: -30px;
  border-radius: 3px;
  background: #e35a0b;
}

.gear {
  display: flex;
  align-items: center;
  margin: 0 0 2px 16px;
}

.info-line {
  height: 62px;
  border-bottom: 1px solid #d9d9d9;
  box-sizing: border-box;
  padding-left: 12px;
  display: flex;
  gap: 9px;
  font-size: 35.500px;
  line-height: 66px;
}

.info-line b {
  font-size: 38.500px;
  letter-spacing: -0.1px;
}

.avg { color: #f3b93f; }
.last { color: #e02b2b; }
.last b + b { margin-left: 17px; }

/* 走势图 */
.grid {
  fill: none;
  stroke: #ccc;
  stroke-width: 1;
}

.dotted {
  stroke: #c8c8c8;
  stroke-dasharray: 1 2;
}

.zero {
  stroke: #888;
  stroke-width: 2;
  stroke-dasharray: 10 10;
}

.line-price, .line-avg {
  fill: none;
  stroke: #3572b5;
  stroke-width: 2;
  vector-effect: non-scaling-stroke;
}

.line-avg {
  stroke: #f2bf55;
}

.watermark {
  font-size: 103px;
  font-weight: 900;
  fill: #f7f7f7;
}

.axis {
  font-size: 41px;
}

.pct {
  text-anchor: end;
  letter-spacing: 0.8px;
}

.pct.minus {
  letter-spacing: 1.8px;
}

.mark-line {
  stroke-width: 3;
  stroke-dasharray: 7 7;
}

.mark-text {
  font: bold 31px "Liberation Sans", sans-serif;
  text-anchor: middle;
  fill: #fff;
}

.sell rect { fill: #66a4fc; }
.sell circle { fill: #2f86f6; fill-opacity: 0.8; }
.sell path { stroke: #5f9fe6; }
.buy rect { fill: #fb7b69; }
.buy circle { fill: #f4493c; fill-opacity: 0.8; }
.buy path { stroke: #ec7466; }

/* 成交量 */
.vol-head {
  height: 62px;
  display: flex;
  align-items: center;
  padding-left: 15px;
  font-size: 36px;
  line-height: 58px;
  white-space: nowrap;
}

.vol-head > span {
  padding-top: 3px;
}

.vol-select {
  box-sizing: border-box;
  width: 133px;
  height: 48px;
  display: flex;
  align-items: center;
  padding-left: 10px;
  border: 1px solid #e4e6ea;
  border-radius: 8px;
  background: #f6f7fa;
  font-size: 29.500px;
  color: #222;
}

.vol-total {
  width: 163px;
  margin-left: 2px;
  letter-spacing: -0.9px;
}

.vol-min {
  width: 272px;
  display: flex;
  align-items: center;
}

.vol-min svg {
  margin-left: 9px;
}

.vol-now b {
  color: #e02b2b;
}

.vol-box {
  position: relative;
}

.vol-max {
  font-size: 31px;
  fill: #999;
}

.expand {
  position: absolute;
  top: 12px;
  right: 24px;
  width: 69px;
  height: 69px;
  border-radius: 50%;
  background: #fef1ea;
  display: flex;
  align-items: center;
  justify-content: center;
}

.dates {
  height: 57px;
  margin: 0 12px;
  padding-left: 8px;
  border-bottom: 1px solid #ccc;
  display: flex;
  font-size: 41px;
  line-height: 60px;
  color: #999;
}

.dates span {
  flex: none;
  width: 211px;
  text-align: center;
}

/* 活动条 */
.promo {
  height: 90px;
  margin: 18px 18px 17px;
  box-sizing: border-box;
  padding: 0 38px 0 30px;
  border-radius: 45px;
  background: #fdeee4;
  display: flex;
  align-items: center;
  color: #e35a0b;
}

.promo-text {
  flex: 1;
  margin-left: 52px;
  padding-top: 1px;
  font-size: 39.100px;
  line-height: 60px;
  white-space: nowrap;
}

.promo-text b {
  letter-spacing: 2.500px;
}

.promo-line {
  width: 1px;
  height: 35px;
  margin-right: 16px;
  background: #e35a0b;
}

.tabs {
  height: 103px;
  border-top: 1px solid #d9d9d9;
  border-bottom: 1px solid #d9d9d9;
  display: flex;
  padding: 0 29px 0 27px;
}

.tab {
  position: relative;
  flex: 1;
  text-align: center;
  font-size: 43.500px;
  line-height: 111px;
  height: 103px;
  color: #666;
}

.tab.active {
  color: #e35a0b;
}

/* 卡片 */
.cards {
  height: 130px;
  overflow: hidden;
  display: flex;
  gap: 18px;
  padding: 0 28px 0 36px;
}

.card {
  position: relative;
  width: 499px;
  height: 160px;
  margin-top: 12px;
  border-radius: 24px;
  background: #fff8f6;
  overflow: hidden;
  flex: none;
}

.card-bg {
  position: absolute;
  right: 0;
  top: 0;
}

.card-title {
  position: relative;
  display: flex;
  align-items: center;
  height: 108px;
  padding-left: 24px;
  gap: 12px;
  font-size: 41.500px;
  font-weight: bold;
}

.card-title span {
  line-height: 50px;
  padding-top: 2px;
}

.rank {
  position: relative;
  margin: -7px 0 0 27px;
  font-size: 35.800px;
  line-height: 44px;
  color: #666;
}

.rank b {
  color: #e0481a;
  font-weight: bold;
}

.rank-one {
  font-size: 14px;
  font-weight: bold;
  fill: #e0605c;
}

.vs {
  font-size: 30px;
  font-weight: 900;
  font-style: italic;
  letter-spacing: -3px;
  fill: #fff;
}

.vs-big, .vs-shadow {
  font-size: 152px;
  font-weight: 900;
  font-style: italic;
  letter-spacing: -4px;
  fill: #fbe7e4;
}

.vs-shadow {
  font-size: 186px;
  fill: #fff6f4;
}

.vote {
  position: relative;
  width: 415px;
  height: 60px;
  margin: -5px 0 0 40px;
  border: 4px solid #fff;
  border-radius: 40px;
  display: flex;
  gap: 6px;
  overflow: hidden;
  background: #fff;
}

.up, .down {
  flex: 1;
  background: #fddcd9;
}

.down {
  background: #d6eedd;
}

/* 底部栏 */
.bottom {
  height: 136px;
  box-sizing: border-box;
  border-top: 1px solid #cfd2d7;
  background: #f7f8fb;
  display: flex;
}

.index {
  width: 275px;
  display: flex;
  flex-direction: column;
  align-items: center;
}

.index-arrow {
  margin-top: 9px;
  border: 11px solid transparent;
  border-bottom: 7px solid #777;
  border-top: 0;
}

.index-value {
  font-size: 41px;
  line-height: 50px;
  margin-top: 10px;
  color: #e02b2b;
}

.index-row {
  width: 226px;
  margin-left: 31px;
  display: flex;
  justify-content: space-between;
  align-items: center;
  line-height: 50px;
  font-size: 35px;
  color: #666;
}

.index-row b {
  font-size: 39.500px;
  color: #e02b2b;
}

.action {
  flex: 1;
  padding-top: 10px;
  display: flex;
  flex-direction: column;
  align-items: center;
  font-size: 35px;
  line-height: 50px;
  color: #666;
}

.action span {
  margin-top: 15px;
}

.action.add {
  color: #e35a0b;
}

/* 系统导航 */
.sys-nav {
  height: 126px;
  display: flex;
  align-items: center;
  justify-content: space-between;
  box-sizing: border-box;
  padding: 0 230px 0 245px;
}

.home {
  margin-right: 12px;
}
</style>
